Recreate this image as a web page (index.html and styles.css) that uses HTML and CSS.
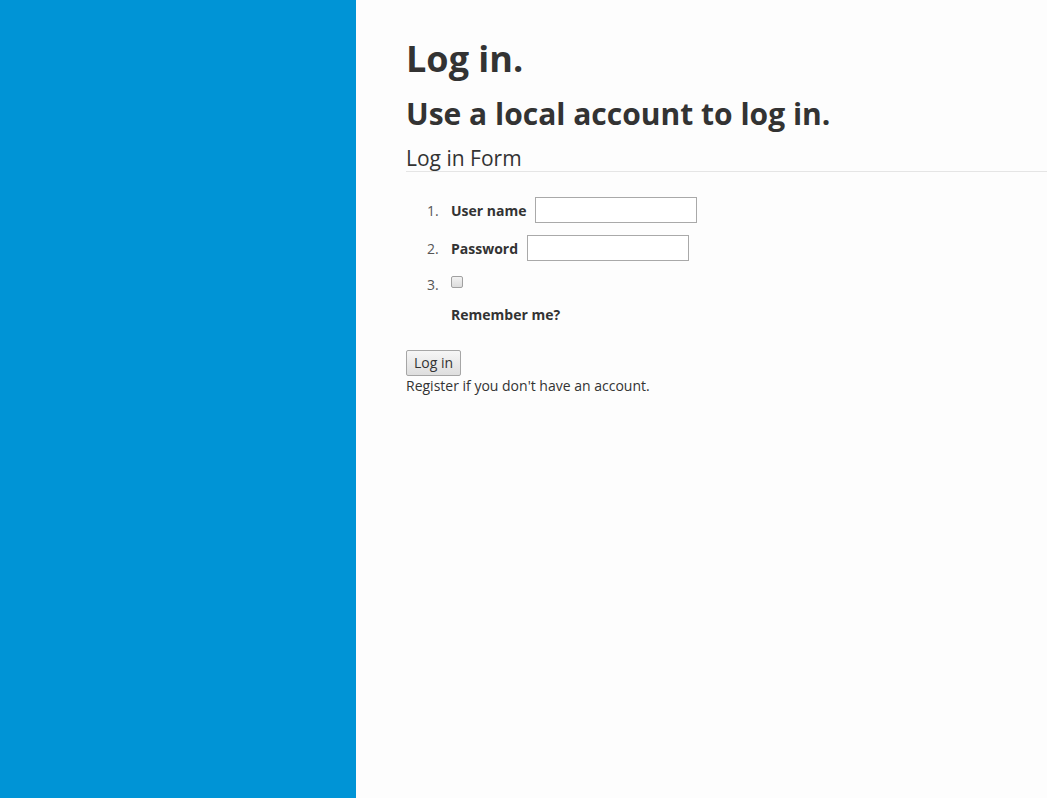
FILE: index.html
```html
<!DOCTYPE html>
<html>
<head>
<meta charset="utf-8">
<link rel="stylesheet" href="styles.css">
</head>
<body>
<div class="page">
  <aside class="sidebar"></aside>
  <main class="content">
    <h1 class="title">Log in.</h1>
    <h2 class="subtitle">Use a local account to log in.</h2>
    <form class="login">
      <div class="legend">Log in Form</div>
      <ol class="fields">
        <li class="field"><label class="lbl">User name</label><input class="txt" type="text"></li>
        <li class="field"><label class="lbl">Password</label><input class="txt" type="password"></li>
        <li class="field-check">
          <div class="check-row"><input class="cb" type="checkbox"></div>
          <label class="lbl block">Remember me?</label>
        </li>
      </ol>
      <button class="btn" type="button">Log in</button>
    </form>
    <p class="reg">Register if you don't have an account.</p>
  </main>
</div>
</body>
</html>
```

FILE: styles.css
```css
html, body { margin: 0; padding: 0; height: 100%; }
body { font-family: "Open Sans", "Liberation Sans", sans-serif; color: #333; background: #fdfdfd; font-size: 14px; }
.page { display: flex; min-height: 798px; }
.sidebar { width: 356px; background: #0094d6; flex: none; }
.content { flex: 1; padding: 37px 0 0 50px; }
.title { font-size: 36px; font-weight: 700; margin: 0; line-height: 44px; }
.subtitle { font-size: 30px; font-weight: 700; margin: 13px 0 0; line-height: 40px; }
.login { margin: 0; }
.legend { font-size: 21px; font-weight: 400; line-height: 25px; margin-top: 12px; border-bottom: 1px solid #e5e5e5; }
.fields { margin: 25px 0 25px; padding-left: 45px; list-style: none; counter-reset: item; }
.field, .check-row { counter-increment: item; }
.field::before, .check-row::before { content: counter(item) "."; width: 24px; margin-left: -24px; color: #555; flex: none; }
.field { display: flex; align-items: center; height: 26px; margin-bottom: 12px; }
.lbl { font-weight: 700; margin-right: 9px; }
.txt { box-sizing: border-box; width: 162px; height: 26px; border: 1px solid #a9a9a9; padding: 2px 4px; font: inherit; background: #fff; margin: 0; }
.check-row { display: flex; align-items: flex-start; line-height: 24px; }
.cb { -webkit-appearance: none; appearance: none; box-sizing: border-box; margin: 3px 0 0; width: 12px; height: 12px; border: 1px solid #a0a0a0; border-radius: 2px; background: linear-gradient(#f2f2f2, #dcdcdc); }
.lbl.block { display: block; line-height: 20px; margin-top: 8px; }
.btn { font: inherit; font-size: 14px; line-height: 20px; padding: 2px 7px; border: 1px solid #a6a6a6; background: linear-gradient(#f6f6f6, #dedede); color: #333; margin: 0; border-radius: 2px; display: block; }
.reg { margin: 0; line-height: 20px; }
```
